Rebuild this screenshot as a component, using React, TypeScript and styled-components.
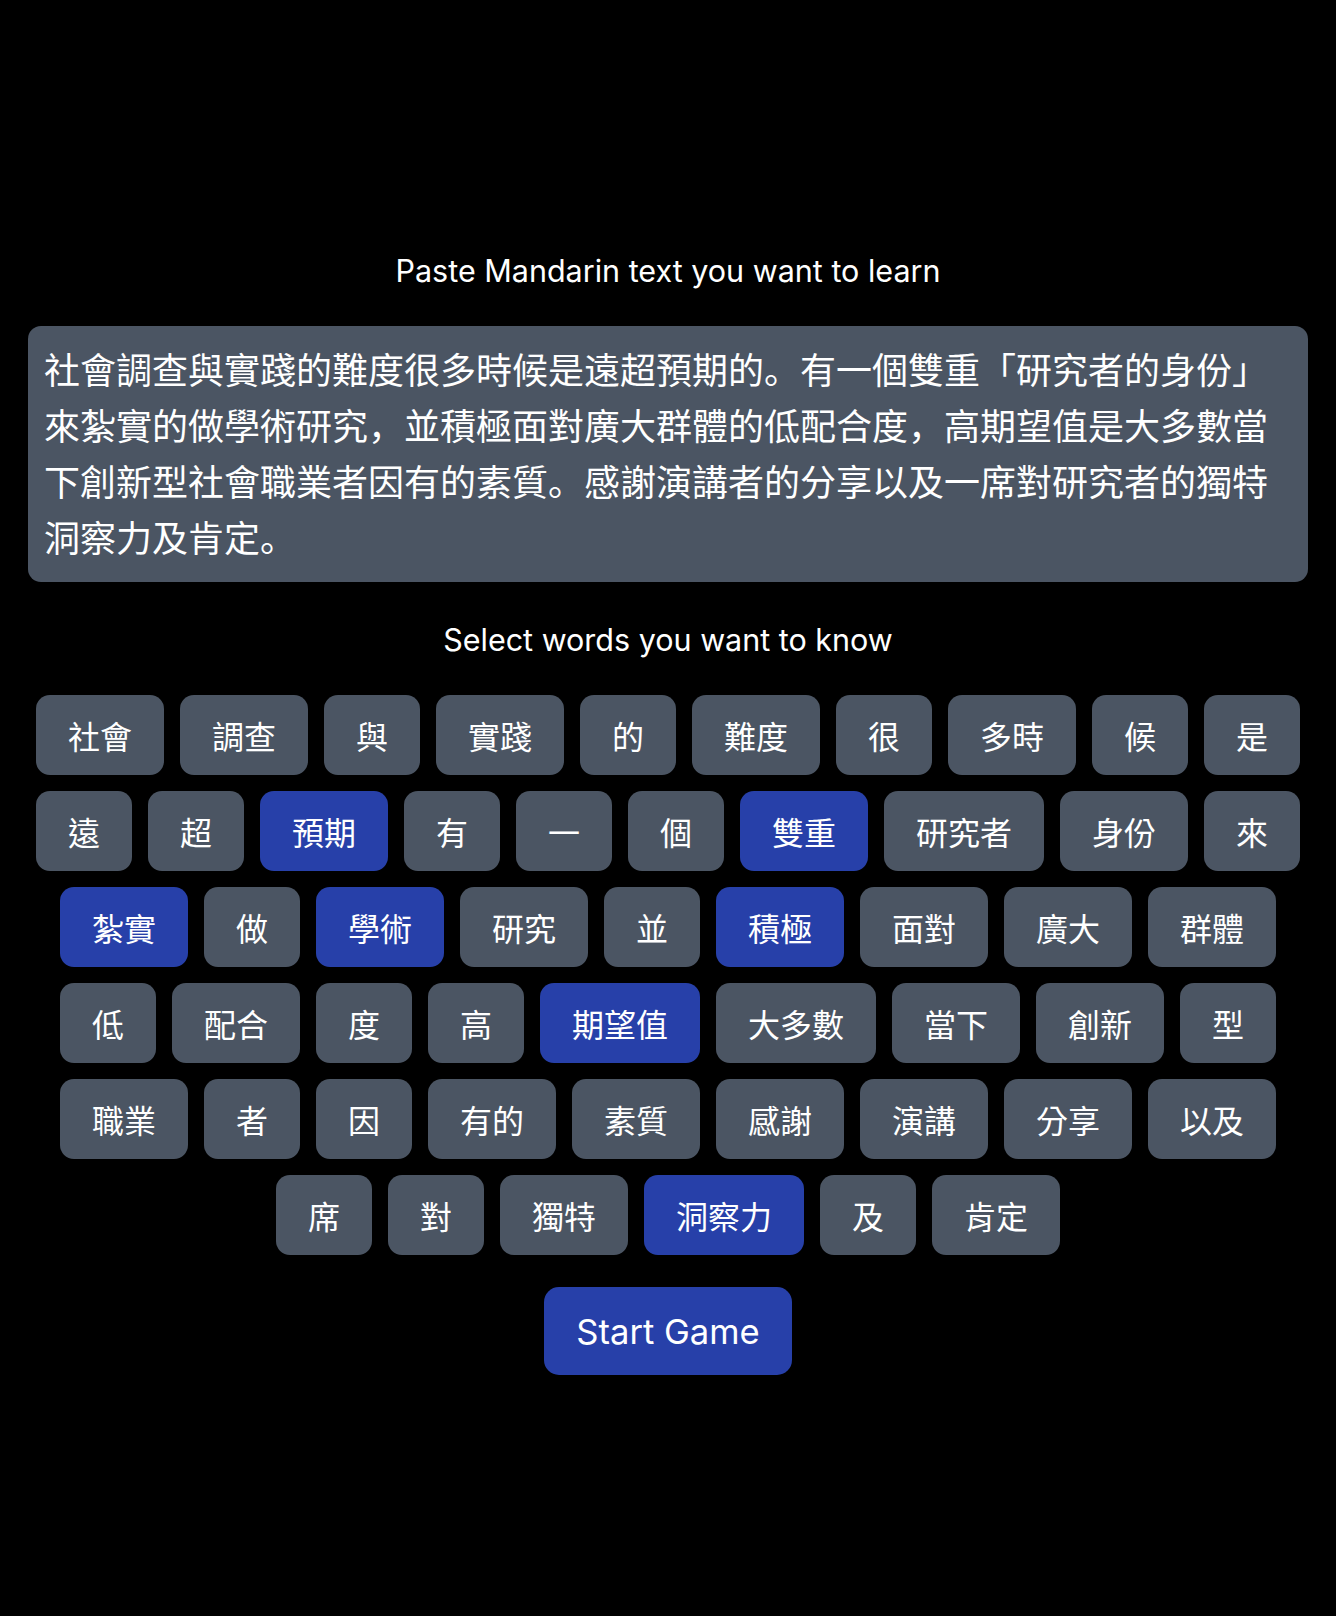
import React, { useState } from "react";
import styled, { createGlobalStyle } from "styled-components";

const GlobalStyle = createGlobalStyle`
  html, body {
    margin: 0;
    padding: 0;
    background: #000;
  }
  body {
    font-family: Inter, "Noto Sans CJK TC", sans-serif;
    color: #fff;
  }
`;

const Page = styled.main`
  box-sizing: border-box;
  width: 1280px;
  min-height: 1616px;
  margin: 0 auto;
  padding-top: 247px;
  display: flex;
  flex-direction: column;
  align-items: center;
`;

const Heading = styled.h2<{ $gap?: number }>`
  margin: ${(p) => p.$gap ?? 0}px 0 0;
  font-family: Inter, "Noto Sans CJK TC", sans-serif;
  font-size: 30.5px;
  line-height: 48px;
  font-weight: 400;
  text-align: center;
  color: #fff;
`;

const TextArea = styled.textarea`
  box-sizing: border-box;
  margin-top: 31px;
  width: 100%;
  height: 256px;
  padding: 14px 16px 18px;
  background: #4b5563;
  color: #fff;
  border: none;
  border-radius: 13px;
  font-family: "Noto Sans CJK SC", "Noto Sans CJK TC", sans-serif;
  font-size: 36px;
  line-height: 56px;
  resize: none;
  outline: none;
  overflow: hidden;
`;

const WordGrid = styled.div`
  margin-top: 31px;
  width: 100%;
  display: flex;
  flex-wrap: wrap;
  justify-content: center;
  gap: 16px;
`;

const WordButton = styled.button<{ $selected: boolean }>`
  height: 80px;
  padding: 0 32px;
  border: none;
  border-radius: 14px;
  background: ${(p) => (p.$selected ? "#2740a9" : "#4b5563")};
  color: #fff;
  font-family: "Noto Sans CJK TC", sans-serif;
  font-size: 32px;
  line-height: 48px;
  cursor: pointer;
`;

const StartButton = styled.button`
  margin-top: 32px;
  height: 88px;
  padding: 0 32px;
  border: none;
  border-radius: 15px;
  background: #2740a9;
  color: #fff;
  font-family: Inter, sans-serif;
  font-size: 34.6px;
  line-height: 40px;
  cursor: pointer;
`;

const TEXT =
  "社會調查與實踐的難度很多時候是遠超預期的。有一個雙重「研究者的身份」來紮實的做學術研究，並積極面對廣大群體的低配合度，高期望值是大多數當下創新型社會職業者因有的素質。感謝演講者的分享以及一席對研究者的獨特洞察力及肯定。";

const WORDS = [
  "社會", "調查", "與", "實踐", "的", "難度", "很", "多時", "候", "是",
  "遠", "超", "預期", "有", "一", "個", "雙重", "研究者", "身份", "來",
  "紮實", "做", "學術", "研究", "並", "積極", "面對", "廣大", "群體",
  "低", "配合", "度", "高", "期望值", "大多數", "當下", "創新", "型",
  "職業", "者", "因", "有的", "素質", "感謝", "演講", "分享", "以及",
  "席", "對", "獨特", "洞察力", "及", "肯定",
];

const INITIAL = new Set(["預期", "雙重", "紮實", "學術", "積極", "期望值", "洞察力"]);

export default function App() {
  const [text, setText] = useState(TEXT);
  const [selected, setSelected] = useState<Set<number>>(
    () => new Set(WORDS.map((w, i) => (INITIAL.has(w) ? i : -1)).filter((i) => i >= 0))
  );

  const toggle = (i: number) => {
    setSelected((prev) => {
      const next = new Set(prev);
      if (next.has(i)) next.delete(i);
      else next.add(i);
      return next;
    });
  };

  return (
    <>
      <GlobalStyle />
      <Page>
        <Heading>Paste Mandarin text you want to learn</Heading>
        <TextArea value={text} onChange={(e) => setText(e.target.value)} />
        <Heading $gap={34}>Select words you want to know</Heading>
        <WordGrid>
          {WORDS.map((w, i) => (
            <WordButton key={i} $selected={selected.has(i)} onClick={() => toggle(i)}>
              {w}
            </WordButton>
          ))}
        </WordGrid>
        <StartButton>Start Game</StartButton>
      </Page>
    </>
  );
}
